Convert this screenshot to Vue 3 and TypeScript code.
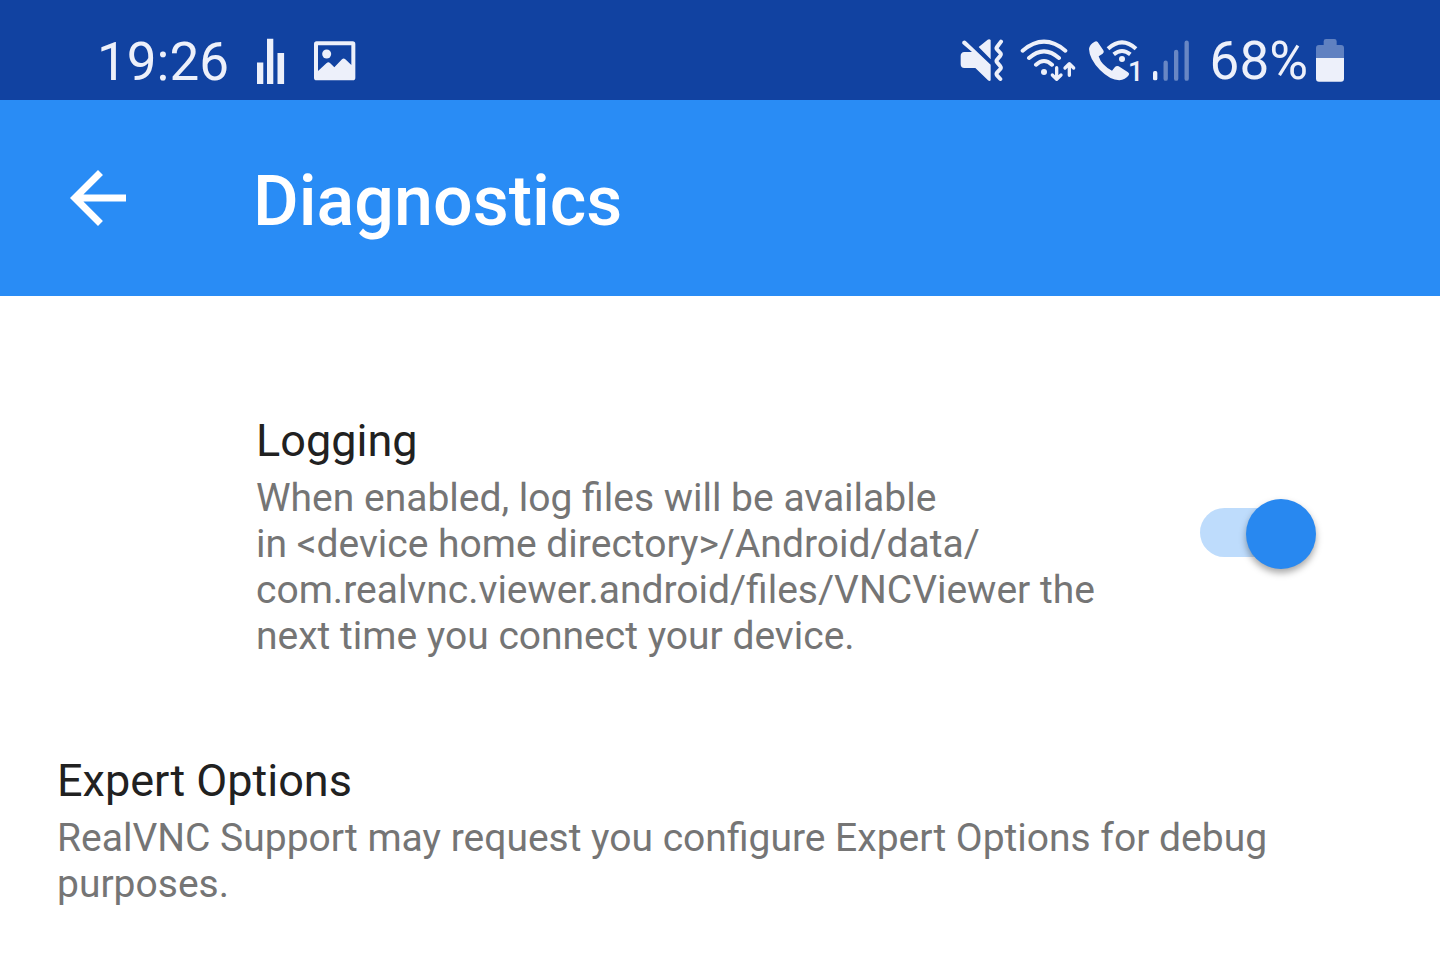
<script setup lang="ts">
import { ref } from 'vue'

const logging = ref(true)
</script>

<template>
  <div class="screen">
    <div class="status">
      <div class="group">
        <span class="clock">19:26</span>
        <svg width="28" height="46" viewBox="0 0 28 46" aria-hidden="true">
          <path d="M0 24.5h6.3V46H0zM10 .8h6.3V46H10zM20.5 15h6.6v31h-6.600z" fill="currentColor" />
        </svg>
        <svg width="43" height="40" viewBox="-3 0 129 120" aria-label="Picture">
          <path fill="currentColor" fill-rule="evenodd" d="M8 1h108q8 0 8 8v101q0 8-8 8H8q-8 0-8-8V9q0-8 8-8zM12 13v77l26-24q5-4 10 0l13 13 23-24q5-5 10 0l18 17V13z" />
          <circle cx="38" cy="39" r="13.500" fill="currentColor" />
        </svg>
      </div>
      <div class="group icons">
        <svg width="48" height="44" viewBox="30 42 144 132" aria-label="Muted">
          <path fill="currentColor" d="M38 49q6-5 10 0l74 70v47q-3 4-8 0l-38-37H43q-11 0-11-11V93q0-11 11-12h23L38 57q-3-4 0-8zM86 66l27-22q5-3 9 1v58z" />
          <path d="M153 50l-12 16q-3 4 0 7l10 11q3 4 0 8l-10 12q-3 4 0 8l10 12q3 4 0 8l-10 11q-3 4 0 8l10 11" fill="none" stroke="currentColor" stroke-width="12" stroke-linecap="round" stroke-linejoin="round" />
        </svg>
        <svg width="57" height="44" viewBox="210 42 171 132" aria-label="Wi-Fi">
          <g fill="none" stroke="currentColor" stroke-width="12" stroke-linecap="round" stroke-linejoin="round">
            <path d="M218 77q64-54 128 0M237 99q45-40 90 0M258 119q24-22 48 0" />
            <path d="M320 128v34M307 150l13 13 13-13M358 151v-34M345 129l13-13 13 13" stroke-width="10" />
          </g>
          <circle cx="282" cy="141" r="9" fill="currentColor" />
        </svg>
        <svg class="calling" width="51" height="44" viewBox="27 42 153 132" aria-label="Wi-Fi calling">
          <path fill="currentColor" d="M44 50q5-3 9 1l17 25q4 6-2 10l-12 8q8 27 40 43l9-11q5-5 11-2l28 18q6 4 2 9-10 14-28 15-28-1-58-31-32-33-33-63 1-14 17-22z" />
          <path d="M84 71q42-38 84 0M101 88q25-20 50 0" fill="none" stroke="currentColor" stroke-width="12" />
          <circle cx="126" cy="102" r="9" fill="currentColor" />
          <text class="sim" x="144" y="168">1</text>
        </svg>
        <svg width="46" height="44" viewBox="216 42 138 132" aria-label="Signal">
          <rect x="219" y="138" width="13" height="28" rx="5" fill="currentColor" />
          <path d="M257 113v48M288.500 81v80M320 53v108" stroke="currentColor" stroke-opacity=".4" stroke-width="13" stroke-linecap="round" />
        </svg>
        <span class="power">
          <span>68%</span>
          <svg width="30" height="44" viewBox="345 42 90 132" aria-label="Battery">
            <path d="M348 99V69q0-9 9-9h14V49q0-7 7-7h25q7 0 7 7v11h13q9 0 9 9v30z" fill="currentColor" opacity=".36" />
            <path d="M348 99h84v62q0 9-9 9h-66q-9 0-9-9z" fill="currentColor" />
          </svg>
        </span>
      </div>
    </div>

    <header class="bar">
      <button class="back" type="button" aria-label="Back">
        <svg width="56" height="56" viewBox="0 0 16 16" aria-hidden="true">
          <path d="M16 7H3.830l5.590-5.590L8 0 0 8l8 8 1.410-1.410L3.830 9H16z" fill="currentColor" />
        </svg>
      </button>
      <h1>Diagnostics</h1>
    </header>

    <main>
      <section class="row logging">
        <label class="copy" for="logging">
          <span class="title">Logging</span>
          <span class="desc">When enabled, log files will be available in&nbsp;&lt;device home directory&gt;/Android/data/<wbr>com.realvnc.viewer.android/files/VNCViewer the next time you connect your device.</span>
        </label>
        <input id="logging" v-model="logging" class="switch" type="checkbox" role="switch" />
      </section>
      <a class="row expert" href="#expert">
        <span class="title">Expert Options</span>
        <span class="desc">RealVNC Support may request you configure Expert Options for debug purposes.</span>
      </a>
    </main>
  </div>
</template>

<style>
body {
  margin: 0;
  background: #fff;
}
</style>

<style scoped>
.screen {
  min-height: 100vh;
  background: #fff;
  font-family: Roboto, "Noto Sans", sans-serif;
}
svg {
  display: block;
  flex: none;
}
.status {
  display: flex;
  align-items: center;
  justify-content: space-between;
  padding: 30px 95px 8px 97px;
  background: #1142a1;
  color: #edf0fa;
  font-size: 53px;
  line-height: 62px;
}
.group {
  display: flex;
  align-items: center;
  gap: 28px;
}
.clock {
  padding-top: 2px;
  line-height: 60px;
}
.icons {
  gap: 12px;
}
.power {
  display: flex;
  align-items: center;
  gap: 7px;
}
.calling {
  overflow: visible;
}
.sim {
  fill: currentColor;
  font-size: 81px;
  font-weight: 500;
}
.bar {
  display: flex;
  align-items: center;
  gap: 120px;
  padding: 57px 63px;
  background: #298cf5;
  color: #fff;
}
.back {
  margin: 0;
  padding: 6px 7px;
  border: 0;
  background: none;
  color: inherit;
  cursor: pointer;
}
h1 {
  margin: 0;
  padding-top: 6px;
  font-size: 70px;
  line-height: 76px;
  font-weight: 500;
}
main {
  padding-top: 71px;
}
.row {
  padding: 47px 57px;
}
.logging {
  display: flex;
  align-items: center;
  justify-content: space-between;
  gap: 98px;
  padding: 47px 124px 48px 256px;
}
.copy {
  flex: 1;
}
.expert {
  display: block;
  color: inherit;
  text-decoration: none;
}
.title,
.desc {
  display: block;
}
.title {
  margin-bottom: 7px;
  color: #212121;
  font-size: 45px;
  line-height: 54px;
}
.desc {
  color: #757575;
  font-size: 39px;
  line-height: 46px;
}
.switch {
  position: relative;
  flex: none;
  appearance: none;
  width: 116px;
  height: 76px;
  margin: 0;
  cursor: pointer;
}
.switch::before {
  content: "";
  position: absolute;
  top: 9px;
  left: 0;
  width: 112px;
  height: 49px;
  border-radius: 25px;
  background: #ccc;
}
.switch::after {
  content: "";
  position: absolute;
  top: 0;
  left: 0;
  width: 70px;
  height: 70px;
  border-radius: 50%;
  background: #fafafa;
  box-shadow: 0 4px 7px rgba(0, 0, 0, 0.35);
}
.switch:checked::before {
  background: #bedcfc;
}
.switch:checked::after {
  left: auto;
  right: 0;
  background: #2888f0;
}
</style>
